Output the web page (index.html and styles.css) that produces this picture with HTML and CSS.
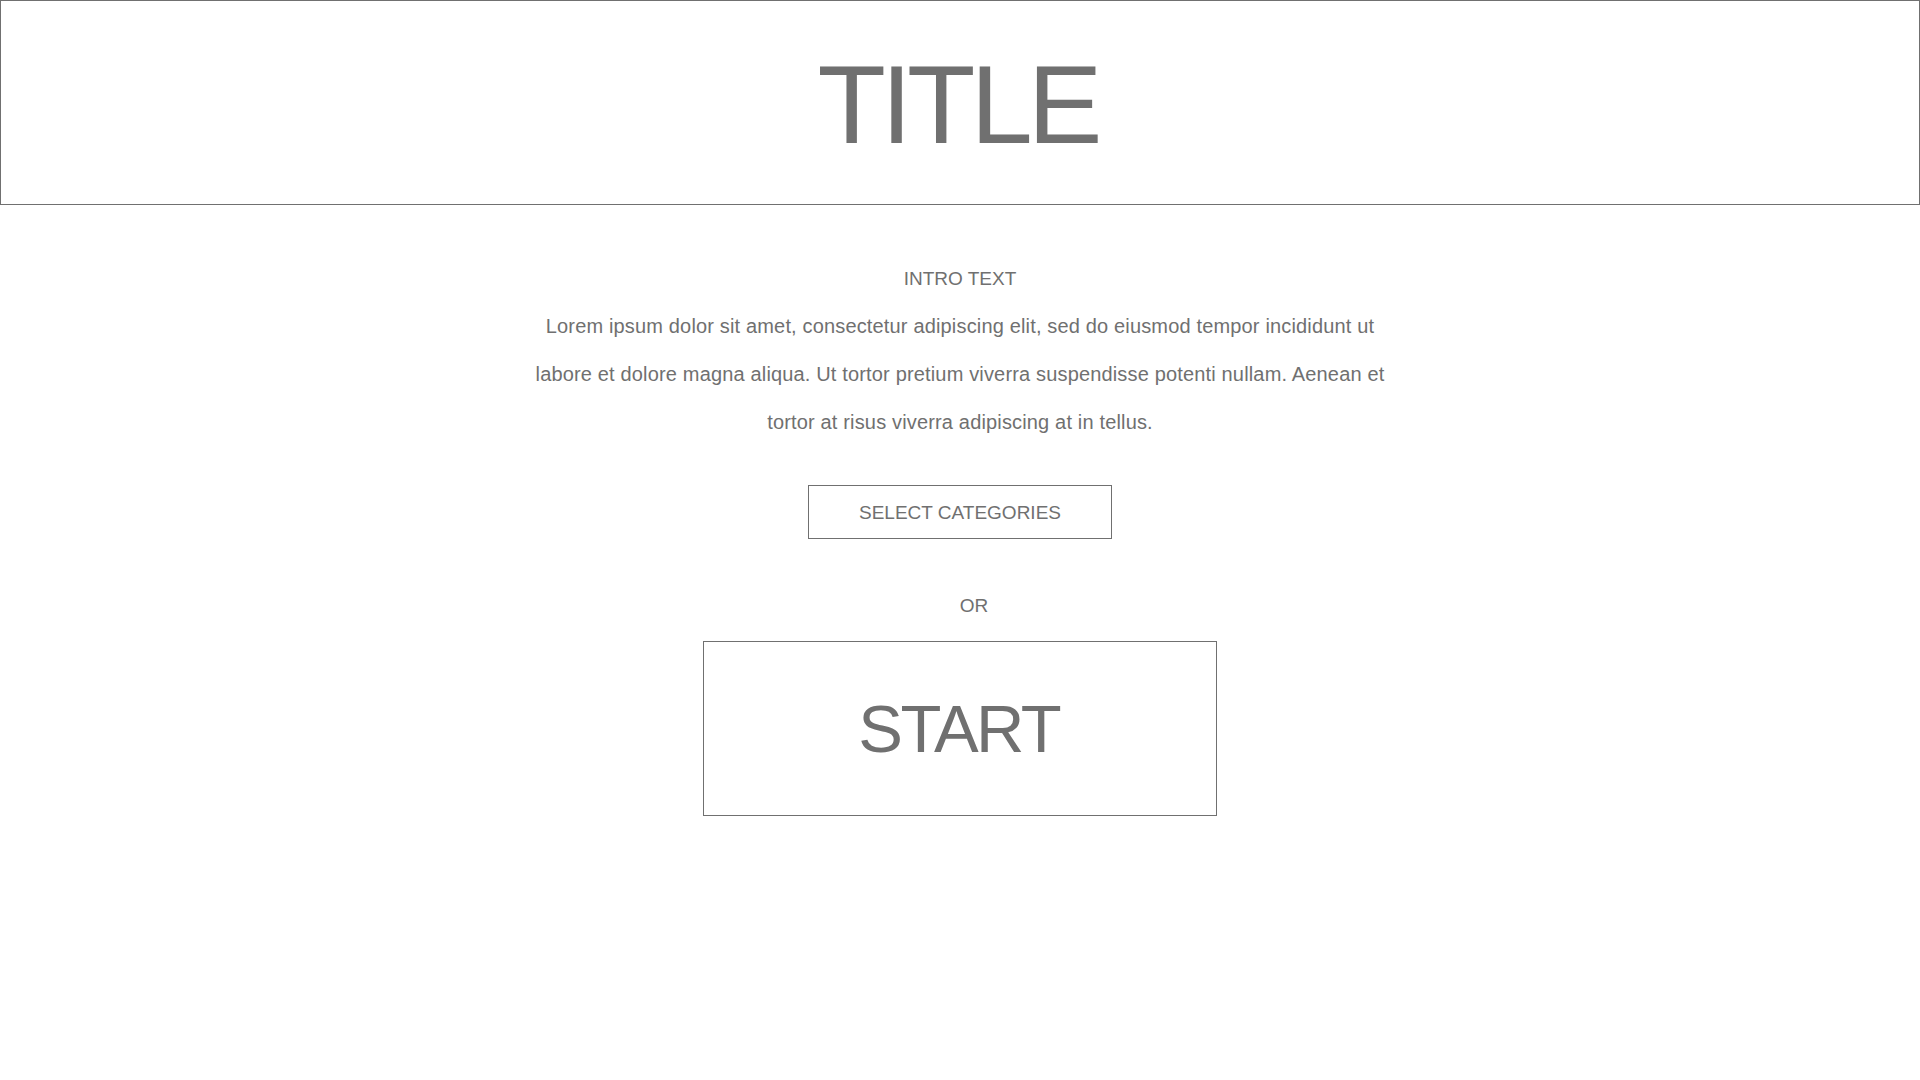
FILE: index.html
```html
<!DOCTYPE html>
<html lang="en">
<head>
<meta charset="utf-8">
<title>Title</title>
<link rel="stylesheet" href="styles.css">
</head>
<body>
<header class="masthead">
  <h1 class="masthead__title">TITLE</h1>
</header>
<main class="intro">
  <h2 class="intro__heading">INTRO TEXT</h2>
  <p class="intro__body">Lorem ipsum dolor sit amet, consectetur adipiscing elit, sed do eiusmod tempor incididunt ut<br>labore et dolore magna aliqua. Ut tortor pretium viverra suspendisse potenti nullam. Aenean et<br>tortor at risus viverra adipiscing at in tellus.</p>
  <button class="btn btn--select" type="button">SELECT CATEGORIES</button>
  <p class="intro__or">OR</p>
  <button class="btn btn--start" type="button">START</button>
</main>
</body>
</html>
```
FILE: styles.css
```css
html, body {
  margin: 0;
  padding: 0;
  background: #ffffff;
}
body {
  font-family: "Liberation Sans", Arial, Helvetica, sans-serif;
  color: #707070;
}
.masthead {
  box-sizing: border-box;
  height: 205px;
  border: 1px solid #707070;
  display: flex;
  align-items: center;
  justify-content: center;
}
.masthead__title {
  margin: 0;
  font-weight: 400;
  font-size: 112px;
  letter-spacing: -5px;
  text-indent: -5px;
  line-height: 1;
  padding-top: 4px;
}
.intro {
  display: flex;
  flex-direction: column;
  align-items: center;
  padding-top: 50px;
}
.intro__heading {
  margin: 0;
  font-weight: 400;
  font-size: 19px;
  line-height: 48px;
}
.intro__body {
  margin: -1px 0 0;
  font-size: 20px;
  letter-spacing: 0.16px;
  line-height: 48px;
  text-align: center;
}
.btn {
  font-family: inherit;
  color: #707070;
  background: #ffffff;
  border: 1px solid #707070;
  border-radius: 0;
  padding: 0;
  cursor: pointer;
}
.btn--select {
  margin-top: 39px;
  width: 304px;
  height: 54px;
  padding-top: 2px;
  font-size: 19px;
}
.intro__or {
  margin: 55px 0 23px 28px;
  font-size: 19px;
  line-height: 24px;
}
.btn--start {
  width: 514px;
  height: 175px;
  font-size: 67px;
  letter-spacing: -2.5px;
  text-indent: -2.5px;
}
```
